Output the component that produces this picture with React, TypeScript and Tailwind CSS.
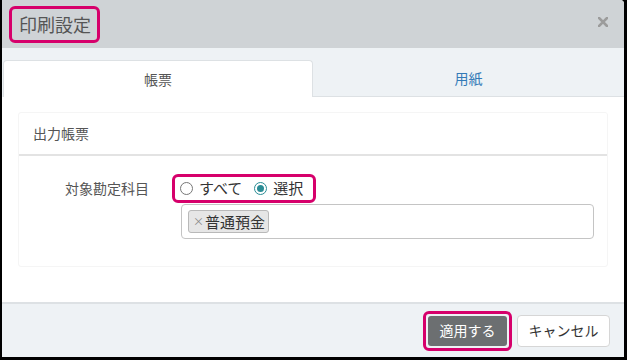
import React from "react";

export default function App() {
  const font = { fontFamily: '"Noto Sans CJK JP", "Noto Sans", sans-serif' };
  return (
    <div
      className="w-[627px] h-[360px] bg-black flex flex-col overflow-hidden"
      style={font}
    >
      <div className="flex-1 flex flex-col ml-[2px] mr-[3px] mb-[3px] bg-white rounded-tr-[4px] overflow-hidden">
        {/* Header */}
        <div className="h-[48px] bg-[#cfd3d6] flex items-center justify-between pl-[7px] pr-[16px] shrink-0">
          <div className="border-[3px] border-[#d6006b] rounded-[6px] h-[37px] pl-[7px] pr-[6px] flex items-center">
            <span className="text-[18px] text-[#555] leading-none">印刷設定</span>
          </div>
          <svg width="10" height="10" viewBox="0 0 10 10" className="mt-[-4px]">
            <path d="M1 1 L9 9 M9 1 L1 9" stroke="#9c9c9c" strokeWidth="2.6" strokeLinecap="square" />
          </svg>
        </div>
        {/* Tabs */}
        <div className="h-[49px] bg-[#eef2f5] flex items-end pl-[1px] shrink-0">
          <div className="w-[310px] h-[37px] bg-white border border-b-0 border-[#dde1e4] rounded-t-[4px] flex items-center justify-center text-[14px] text-[#555]">
            帳票
          </div>
          <div className="flex-1 h-[37px] border-b border-[#dde1e4] flex items-center justify-center text-[14px] text-[#337ab7]">
            用紙
          </div>
        </div>
        {/* Body */}
        <div className="flex-1 bg-white px-[16px] pt-[15px]">
          <div className="h-[155px] border border-[#f5f5f5] rounded-[3px] flex flex-col">
            <div className="h-[43px] border-b-2 border-[#e3e3e3] flex items-center pl-[14px] text-[14px] text-[#555]">
              出力帳票
            </div>
            <div className="flex pt-[18px]">
              <div className="w-[130px] text-right text-[14px] text-[#555] pt-[4px]">
                対象勘定科目
              </div>
              <div className="flex flex-col ml-[23px]">
                <div className="w-[144px] h-[29px] border-[3px] border-[#d6006b] rounded-[6px] flex items-center pl-[5px] gap-[6px] text-[15px] text-[#333]">
                  <span className="w-[13px] h-[13px] rounded-full border border-[#777] bg-white shrink-0" />
                  <span className="mr-[6px]">すべて</span>
                  <span className="w-[13px] h-[13px] rounded-full border border-[#2a8c95] bg-white shrink-0 flex items-center justify-center">
                    <span className="w-[7px] h-[7px] rounded-full bg-[#2a8c95]" />
                  </span>
                  <span>選択</span>
                </div>
                <div className="ml-[9px] mt-[1px] w-[413px] h-[35px] border border-[#c4c4c4] rounded-[4px] flex items-center pl-[6px]">
                  <div className="h-[23px] border border-[#b9b9b9] bg-[#e6e6e6] rounded-[3px] flex items-center pl-[4px] pr-[3px] gap-[1px]">
                    <span className="text-[11px] text-[#888] leading-none">×</span>
                    <span className="text-[15px] text-[#333] leading-none">普通預金</span>
                  </div>
                </div>
              </div>
            </div>
          </div>
        </div>
        {/* Footer */}
        <div className="h-[55px] bg-[#eef2f5] border-t-2 border-[#dde1e4] flex items-center justify-end pr-[14px] gap-[5px] shrink-0">
          <div className="border-[3px] border-[#d6006b] rounded-[6px] p-[2px]">
            <div className="w-[79px] h-[30px] bg-[#6c6f71] rounded-[3px] flex items-center justify-center text-[14px] text-white">
              適用する
            </div>
          </div>
          <div className="w-[93px] h-[32px] bg-white border border-[#d6d6d6] rounded-[4px] flex items-center justify-center text-[14px] text-[#333]">
            キャンセル
          </div>
        </div>
      </div>
    </div>
  );
}
